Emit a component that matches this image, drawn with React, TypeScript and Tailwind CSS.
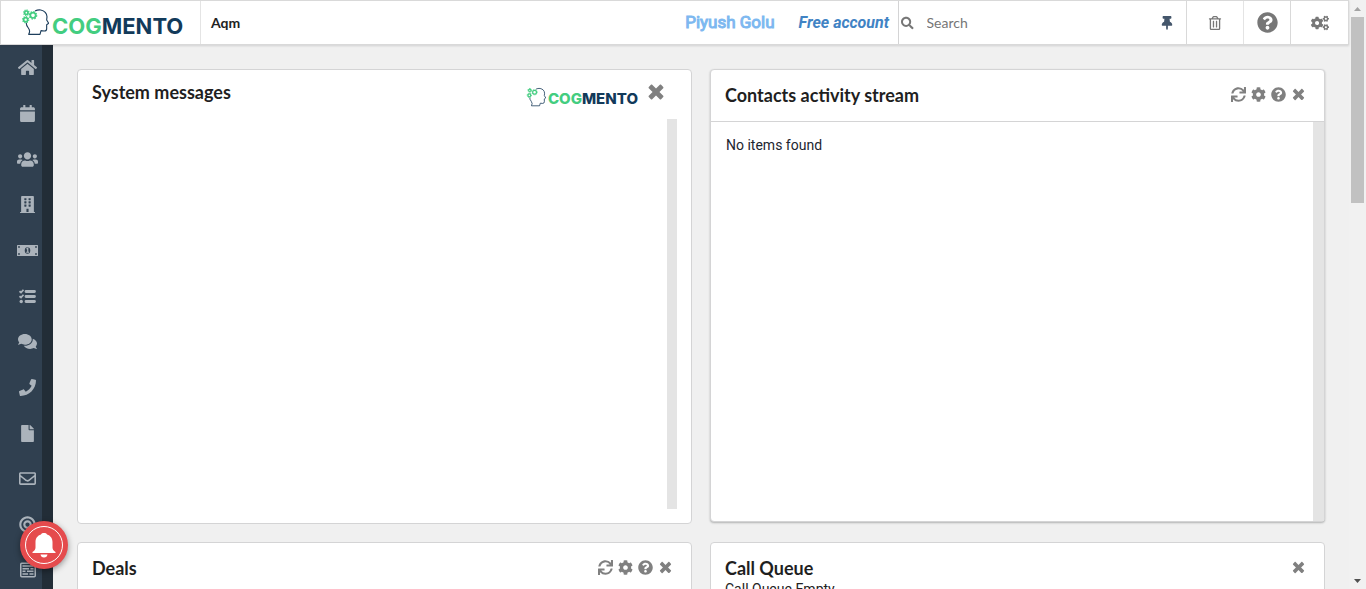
import React from "react";
import {
  FaHome, FaCalendar, FaUsers, FaBuilding, FaComments, FaPhone, FaFile,
  FaRegEnvelope, FaBullseye, FaThumbtack, FaRegTrashAlt, FaQuestionCircle,
  FaCogs, FaCog, FaSync, FaSearch,
} from "react-icons/fa";

function MoneyIcon() {
  return (
    <svg width="21" height="11" viewBox="0 0 42 22" aria-hidden="true">
      <rect width="42" height="22" rx="1" fill="currentColor" />
      <g fill="#304050">
        <circle cx="4" cy="4" r="1.8" />
        <circle cx="38" cy="4" r="1.8" />
        <circle cx="4" cy="18" r="1.8" />
        <circle cx="38" cy="18" r="1.8" />
        <ellipse cx="21" cy="11" rx="5.5" ry="6.5" />
      </g>
      <path d="M19 8L21.5 6.5V14M18.5 14.5H24" fill="none" stroke="currentColor" strokeWidth="2.4" />
    </svg>
  );
}

function TasksIcon() {
  return (
    <svg width="17" height="15" viewBox="0 0 34 30" fill="none" stroke="currentColor" aria-hidden="true">
      <path d="M14 5H31M14 15H31M14 25H31" strokeWidth="5.6" strokeLinecap="round" />
      <path d="M1 4.5L4 7L9 1.5M1 14.5L4 17L9 11.5" strokeWidth="3.6" />
      <circle cx="4.5" cy="25" r="3.4" fill="currentColor" stroke="none" />
    </svg>
  );
}

function FormIcon() {
  return (
    <svg width="16" height="16" viewBox="0 0 32 32" fill="none" stroke="currentColor" aria-hidden="true">
      <rect x="1.5" y="2.5" width="29" height="27" rx="2" strokeWidth="3" />
      <path d="M5 8H27M5 13.5H18M21 13.5H27" strokeWidth="2.8" />
      <path d="M5 18.5H11M14 18.5H27M5 24H16M19 24H27" strokeWidth="2.8" />
    </svg>
  );
}

function BellIcon() {
  return (
    <svg width="26" height="26" viewBox="0 0 52 52" fill="currentColor" aria-hidden="true">
      <path d="M26 2C30 2 31 3 32 5C39 7 43 13 43 20V31C43 35 45 37 49 40V42H3V40C7 37 9 35 9 31V20C9 13 13 7 20 5C21 3 22 2 26 2Z" />
      <path d="M19 45H33Q32 51 26 51Q20 51 19 45Z" />
    </svg>
  );
}

function CloseIcon({ size }: { size: number }) {
  return (
    <svg width={size} height={size} viewBox="0 0 384 512" fill="currentColor" aria-hidden="true">
      <path d="M323.1 441l53.9-53.9c9.4-9.4 9.4-24.5 0-33.9L279.8 256l97.2-97.2c9.4-9.4 9.4-24.5 0-33.9L323.1 71c-9.4-9.4-24.5-9.4-33.9 0L192 168.2 94.8 71c-9.4-9.4-24.5-9.4-33.9 0L7 124.9c-9.4 9.4-9.4 24.5 0 33.9l97.2 97.2L7 353.2c-9.4 9.4-9.4 24.5 0 33.9L60.9 441c9.4 9.4 24.5 9.4 33.9 0l97.2-97.2 97.2 97.2c9.3 9.3 24.5 9.3 33.9 0z" />
    </svg>
  );
}

const navItems = [
  { label: "Home", icon: <FaHome size={19} /> },
  { label: "Calendar", icon: <FaCalendar size={17} /> },
  { label: "Contacts", icon: <FaUsers size={21} /> },
  { label: "Companies", icon: <FaBuilding size={17} /> },
  { label: "Deals", icon: <MoneyIcon /> },
  { label: "Tasks", icon: <TasksIcon /> },
  { label: "Cases", icon: <FaComments size={19} /> },
  { label: "Calls", icon: <FaPhone size={17} /> },
  { label: "Documents", icon: <FaFile size={17} /> },
  { label: "Email", icon: <FaRegEnvelope size={17} /> },
  { label: "Campaigns", icon: <FaBullseye size={17} /> },
  { label: "Forms", icon: <FormIcon /> },
];

function Gear({ x, y, r }: { x: number; y: number; r: number }) {
  return (
    <g stroke="#43cd80" fill="none">
      <circle cx={x} cy={y} r={r} strokeWidth="5" />
      <circle cx={x} cy={y} r={r + 3} strokeWidth="4" pathLength={16} strokeDasharray="1 1" />
    </g>
  );
}

function Logo({ small = false }: { small?: boolean }) {
  return (
    <span className={small ? "flex items-end gap-[2px]" : "flex items-end gap-[3px]"}>
      <svg className={small ? "h-5 w-5" : "h-7 w-7"} viewBox="0 0 84 84" aria-hidden="true">
        <path
          d="M42 9Q50 5 59 6Q77 10 78 26L77 36L83 46L77 50L77 62Q77 69 70 69L60 68L57 79H23Q29 69 22 60Q15 52 16 44"
          fill="none" stroke="#1d3e5c" strokeWidth="3.4" strokeLinejoin="round"
        />
        <Gear x={16} y={14} r={5} />
        <Gear x={36} y={22} r={8} />
        <Gear x={14} y={35} r={6} />
      </svg>
      <span className={small
        ? "font-['Inter'] text-[15px] leading-4 font-extrabold text-[#123a5a]"
        : "font-['Inter'] text-[22px] leading-5 font-bold text-[#123a5a]"}>
        <span className="text-[#43cd80]">COG</span>MENTO
      </span>
    </span>
  );
}

function Tools({ name }: { name: string }) {
  return (
    <div className="flex items-center gap-[5px] pb-[2px] text-[#808080]">
      <button aria-label={`Refresh ${name}`}><FaSync size={15} /></button>
      <button aria-label={`Settings for ${name}`}><FaCog size={15} /></button>
      <button aria-label={`Help for ${name}`}><FaQuestionCircle size={15} /></button>
      <button aria-label={`Close ${name}`}><CloseIcon size={15} /></button>
    </div>
  );
}

const card = "rounded border border-[#d4d4d5] bg-white";
const title = "text-lg leading-6 font-bold text-[#1f1f1f]";

export default function App() {
  return (
    <div className="flex h-screen overflow-hidden bg-[#f0f0f0] font-['Lato',sans-serif]">
      <div className="flex min-w-0 flex-1 flex-col">
        <header className="z-10 flex h-[45px] shrink-0 border border-[#d9d9d9] bg-white shadow-[0_1px_2px_rgba(34,36,38,0.15)]">
          <a href="#home" aria-label="Cogmento" className="flex w-[200px] items-start border-r border-[#e4e4e4] pt-[7px] pl-5">
            <Logo />
          </a>
          <span className="flex items-center pl-[10px] text-sm font-bold text-[#222]">Aqm</span>
          <div className="ml-auto flex items-center gap-6 pr-[9px] font-['Roboto',sans-serif]">
            <a href="#profile" className="text-[17px] text-[#7db8f0] [-webkit-text-stroke:1px]">Piyush Golu</a>
            <a href="#account" className="text-base font-bold text-[#4183c4] italic">Free account</a>
          </div>
          <label className="flex w-[250px] items-center border-l border-[#d4d4d5] pl-[2px] text-[#767676]">
            <FaSearch size={14} />
            <input type="text" placeholder="Search" aria-label="Search" className="ml-[13px] w-full min-w-0 text-sm outline-none placeholder:text-[#767676]" />
          </label>
          <button aria-label="Pin" className="flex w-[38px] items-center justify-center text-[#44566b]"><FaThumbtack size={14} /></button>
          <button aria-label="Trash" className="flex w-[57px] items-center justify-center border-l border-[#d9d9d9] text-[#777]"><FaRegTrashAlt size={14} /></button>
          <button aria-label="Help" className="flex w-[47px] items-center justify-center border-l border-[#e4e4e4] text-[#777]"><FaQuestionCircle size={21} /></button>
          <button aria-label="Settings" className="flex w-[58px] items-center justify-center border-l border-[#d9d9d9] text-[#777]"><FaCogs size={18} /></button>
        </header>
        <div className="flex min-h-0 flex-1">
          <nav className="relative w-[53px] shrink-0 border-r-[11px] border-[#222d37] bg-[#304050]">
            <ul className="flex h-[548px] flex-col pl-[13px] text-[#abb3bb]">
              {navItems.map((item) => (
                <li key={item.label} className="flex flex-1">
                  <a href={`#${item.label.toLowerCase()}`} aria-label={item.label} className="flex w-[29px] items-center justify-center">
                    {item.icon}
                  </a>
                </li>
              ))}
            </ul>
            <button aria-label="Notifications" className="absolute bottom-5 left-5 flex h-12 w-12 items-center justify-center rounded-full bg-[#e54b4d] shadow-[0_2px_6px_rgba(0,0,0,0.4)]">
              <span className="flex h-[38px] w-[38px] items-center justify-center rounded-full border border-white text-white">
                <BellIcon />
              </span>
            </button>
          </nav>
          <main className="grid flex-1 grid-cols-2 content-start items-start gap-[18px] overflow-hidden px-6 pt-6">
            <section className={`${card} flex h-[455px] flex-col px-[14px] pb-[14px]`}>
              <div className="flex h-[49px] shrink-0 items-start justify-between pt-[10px] pr-[11px]">
                <h2 className={title}>System messages</h2>
                <div className="flex items-start gap-2 text-[#808080]">
                  <div className="pt-[7px]"><Logo small /></div>
                  <button aria-label="Close System messages" className="pt-[2px]"><CloseIcon size={20} /></button>
                </div>
              </div>
              <div className="ml-auto w-[10px] flex-1 bg-[#e4e4e4]" />
            </section>
            <section className={`${card} flex h-[453px] flex-col shadow-[0_1px_2px_rgba(34,36,38,0.3)]`}>
              <div className="flex h-[52px] shrink-0 items-center justify-between border-b border-[#d4d4d5] pr-[18px] pb-px pl-[14px]">
                <h2 className={title}>Contacts activity stream</h2>
                <Tools name="Contacts activity stream" />
              </div>
              <div className="flex flex-1 justify-between">
                <p className="pt-[13px] pl-[15px] font-['Roboto',sans-serif] text-sm text-[#1c2530]">No items found</p>
                <div className="w-[11px] bg-[#e4e4e4]" />
              </div>
            </section>
            <section className={`${card} h-[200px] pt-[13px] pr-[18px] pl-[14px]`}>
              <div className="flex items-center justify-between">
                <h2 className={title}>Deals</h2>
                <Tools name="Deals" />
              </div>
            </section>
            <section className={`${card} h-[200px] pt-[13px] pr-[18px] pl-[14px]`}>
              <div className="flex items-center justify-between">
                <h2 className={title}>Call Queue</h2>
                <button aria-label="Close Call Queue" className="pb-[2px] text-[#808080]"><CloseIcon size={15} /></button>
              </div>
              <p className="font-['Roboto',sans-serif] text-sm leading-[18px] text-[#222]">Call Queue Empty</p>
            </section>
          </main>
        </div>
      </div>
      <div aria-hidden="true" className="flex w-[17px] shrink-0 flex-col items-center bg-[#f1f1f1]">
        <span className="flex h-[17px] items-center"><svg width="7" height="4" viewBox="0 0 7 4" fill="#a3a3a3"><path d="M0 4L3.5 0L7 4Z" /></svg></span>
        <span className="h-[186px] w-[13px] bg-[#c1c1c1]" />
        <span className="mt-auto flex h-[17px] items-center"><svg width="7" height="4" viewBox="0 0 7 4" fill="#505050"><path d="M0 0H7L3.5 4Z" /></svg></span>
      </div>
    </div>
  );
}
